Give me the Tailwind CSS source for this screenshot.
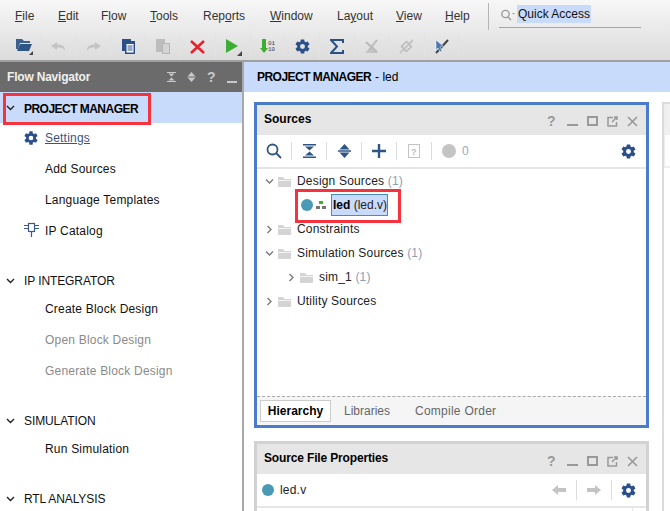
<!DOCTYPE html>
<html lang="en">
<head>
<meta charset="utf-8"/>
<title>Vivado - led</title>
<script src="https://cdn.jsdelivr.net/npm/@tailwindcss/browser@4"></script>
</head>
<body class="w-[670px] h-[511px] overflow-hidden relative bg-white font-['Liberation_Sans',Arial,sans-serif] text-[12px] text-[#111]">

<!-- menu + toolbar -->
<div class="h-[62px] border-b-2 border-[#a0a0a0] bg-gradient-to-b from-[#f7f7f7] to-[#dcdcdc]">
  <div class="h-[32px] flex items-center pl-[15px] text-[#333]">
    <span class="w-[43px]"><u>F</u>ile</span>
    <span class="w-[43px]"><u>E</u>dit</span>
    <span class="w-[49px]">F<u>l</u>ow</span>
    <span class="w-[53px]"><u>T</u>ools</span>
    <span class="w-[67px]">Rep<u>o</u>rts</span>
    <span class="w-[67px]"><u>W</u>indow</span>
    <span class="w-[59px]">La<u>y</u>out</span>
    <span class="w-[49px]"><u>V</u>iew</span>
    <span class="w-[42px]"><u>H</u>elp</span>
    <div class="w-px h-[27px] bg-[#b5b5b5] ml-px"></div>
    <div class="ml-[10px] w-[142px] h-[23px] self-start mt-[5px] border-b border-[#a5a5a5] flex items-start">
      <svg class="mt-[4px] ml-px" width="16" height="12" viewBox="0 0 16 12" fill="none" stroke="#999" stroke-width="1.3"><circle cx="5.5" cy="5" r="3.7"/><path d="M8 8l3 3"/><path d="M12 4h3l-1.500 1.500z" fill="#999" stroke="none"/></svg>
      <span class="ml-px bg-[#c8dbfb] h-[18px] leading-[18px] px-px text-[#111]">Quick Access</span>
    </div>
  </div>
  <div class="h-[28px] flex items-center pl-[7px]">
    <div class="w-[34.8px] h-[24px] flex items-center justify-center border-r border-[#e2e2e2]">
      <svg class="ml-[3px] mt-[2px]" width="20" height="18" viewBox="0 0 20 18"><path d="M1 1h6l2 2h6v2H5L3 11H1z" fill="#3d5f8f"/><path d="M5 6h12l-3 7H2z" fill="#2f5585"/><path d="M14 17l4-4v4z" fill="#444"/></svg>
    </div>
    <div class="w-[34.8px] h-[24px] flex items-center justify-center border-r border-[#e2e2e2]">
      <svg width="15" height="11" viewBox="0 0 15 11"><path d="M0 5l6-4v2.500c5 0 8 2 8 6-2-2.500-4-3-8-3V9z" fill="#c4c4c4"/></svg>
    </div>
    <div class="w-[34.8px] h-[24px] flex items-center justify-center border-r border-[#e2e2e2]">
      <svg width="15" height="11" viewBox="0 0 15 11"><path d="M15 5L9 1v2.500c-5 0-8 2-8 6 2-2.500 4-3 8-3V9z" fill="#c4c4c4"/></svg>
    </div>
    <div class="w-[34.8px] h-[24px] flex items-center justify-center border-r border-[#e2e2e2]">
      <svg class="mt-px" width="13" height="15" viewBox="0 0 13 15"><path d="M0 0h9v2H3v10H0z" fill="#2b4f8a"/><rect x="3" y="2" width="10" height="13" fill="#2b4f8a"/><rect x="4.500" y="5" width="7" height="8.500" fill="#fff"/><path d="M5.500 7h5M5.500 9h5M5.500 11h5" stroke="#2b4f8a"/></svg>
    </div>
    <div class="w-[34.8px] h-[24px] flex items-center justify-center border-r border-[#e2e2e2]">
      <svg class="mt-px" width="14" height="15" viewBox="0 0 14 15"><rect x="0" y="0" width="9" height="13" fill="#bdbdbd"/><rect x="6.500" y="4.500" width="7" height="10" fill="#d4d4d4" stroke="#b5b5b5"/></svg>
    </div>
    <div class="w-[34.8px] h-[24px] flex items-center justify-center border-r border-[#e2e2e2]">
      <svg class="mt-px" width="15" height="14" viewBox="0 0 15 14"><path d="M1 1l13 12M14 1L1 13" stroke="#e8202a" stroke-width="2.500"/></svg>
    </div>
    <div class="w-[34.8px] h-[24px] flex items-center justify-center border-r border-[#e2e2e2]">
      <svg class="ml-[3px] mt-[3px]" width="17" height="18" viewBox="0 0 17 18"><path d="M0 0l12 7L0 14z" fill="#3cae33"/><path d="M11 17l5-5v5z" fill="#444"/></svg>
    </div>
    <div class="w-[34.8px] h-[24px] flex items-center justify-center border-r border-[#e2e2e2]">
      <svg class="mt-px" width="15" height="15" viewBox="0 0 15 15"><path d="M2 0h4v9h2l-4 5-4-5h2z" fill="#3cae33"/><text x="8" y="6" font-size="6" fill="#444" font-family="Liberation Mono">01</text><text x="8" y="12" font-size="6" fill="#444" font-family="Liberation Mono">10</text></svg>
    </div>
    <div class="w-[34.8px] h-[24px] flex items-center justify-center border-r border-[#e2e2e2]">
      <svg class="mt-px" width="17" height="17" viewBox="0 0 24 24"><path fill="#2b4f8a" d="M19.400 13a7.800 7.800 0 0 0 0-2l2.500-1.900-2.400-4.200-3 1.200a7.500 7.500 0 0 0-1.700-1L14.400 2H9.600l-.4 3.100a7.500 7.500 0 0 0-1.700 1l-3-1.200-2.400 4.200L4.600 11a7.800 7.800 0 0 0 0 2l-2.500 1.900 2.400 4.200 3-1.200a7.500 7.500 0 0 0 1.700 1l.4 3.100h4.800l.4-3.100a7.500 7.500 0 0 0 1.700-1l3 1.200 2.400-4.200zM12 15.500a3.500 3.500 0 1 1 0-7 3.500 3.500 0 0 1 0 7z"/></svg>
    </div>
    <div class="w-[34.8px] h-[24px] flex items-center justify-center border-r border-[#e2e2e2]">
      <svg class="mt-px" width="14" height="15" viewBox="0 0 14 15"><path d="M13 4V1H1l6 6.500L1 14h12v-3" fill="none" stroke="#2b4f8a" stroke-width="2"/></svg>
    </div>
    <div class="w-[34.8px] h-[24px] flex items-center justify-center border-r border-[#e2e2e2]">
      <svg class="mt-px" width="15" height="15" viewBox="0 0 15 15"><path d="M1 14h13L8 6z" fill="#c4c4c4"/><path d="M2 3l11 10M13 1L5 11" stroke="#bbb" stroke-width="2"/></svg>
    </div>
    <div class="w-[34.8px] h-[24px] flex items-center justify-center border-r border-[#e2e2e2]">
      <svg class="mt-px" width="15" height="15" viewBox="0 0 15 15"><path d="M1 14L14 1" stroke="#c4c4c4" stroke-width="2"/><rect x="4" y="4" width="7" height="7" transform="rotate(45 7.500 7.500)" fill="none" stroke="#bbb" stroke-width="1.500"/></svg>
    </div>
    <div class="w-[34.8px] h-[24px] flex items-center justify-center border-r border-[#e2e2e2]">
      <svg class="mt-px" width="15" height="15" viewBox="0 0 15 15"><path d="M2 14L14 1" stroke="#444" stroke-width="2"/><path d="M2 1l7 6-3 1 2 4-2 1-2-4-2 2z" fill="#4a78b5" stroke="#fff" stroke-width=".5"/></svg>
    </div>
  </div>
</div>

<div class="flex h-[449px]">
  <!-- flow navigator -->
  <aside class="w-[244px] shrink-0 border-r-2 border-[#a9a9a9] tracking-[0.2px]">
    <div class="h-[30px] bg-[#6b6b6b] flex items-center pl-[7px] pr-[5px] font-bold">
      <span class="flex-1 text-[#f0f0f0] tracking-[-0.2px]">Flow Navigator</span>
      <div class="flex items-center gap-[11px]">
        <svg width="9" height="10" viewBox="0 0 9 10"><path d="M0 0h9v1H0zM0 9h9v1H0zM4.500 4.500L1.500 1.500h6zM4.500 5.500L1.500 8.500h6z" fill="#c8c8c8"/></svg>
        <svg width="9" height="10" viewBox="0 0 9 10"><path d="M4.500 0L1 4h7zM4.500 10L1 6h7zM.5 4.600h8v.8h-8z" fill="#c8c8c8"/></svg>
        <span class="font-bold text-[14px] leading-none text-[#c8c8c8] w-[9px]">?</span>
        <div class="w-[10px] h-[2px] bg-[#c8c8c8] mt-[9px]"></div>
      </div>
    </div>
    <div class="h-[31px] bg-[#c8dbfb] flex items-center">
      <svg class="ml-[6px]" width="9" height="6" viewBox="0 0 9 6" fill="none" stroke="#222" stroke-width="1.400"><path d="M1 1l3.500 3.500L8 1"/></svg>
      <span class="ml-[9px] mt-[2px] font-bold text-black tracking-[-0.53px]">PROJECT MANAGER</span>
    </div>
    <div class="h-[30px] flex items-center pl-[23px]">
      <svg class="-mt-px" width="16" height="16" viewBox="0 0 24 24"><path fill="#2b4f8a" d="M19.400 13a7.800 7.800 0 0 0 0-2l2.500-1.900-2.400-4.200-3 1.200a7.500 7.500 0 0 0-1.700-1L14.400 2H9.600l-.4 3.100a7.500 7.500 0 0 0-1.700 1l-3-1.200-2.400 4.200L4.600 11a7.800 7.800 0 0 0 0 2l-2.500 1.900 2.400 4.200 3-1.200a7.500 7.500 0 0 0 1.700 1l.4 3.100h4.800l.4-3.100a7.500 7.500 0 0 0 1.700-1l3 1.200 2.400-4.200zM12 15.500a3.500 3.500 0 1 1 0-7 3.500 3.500 0 0 1 0 7z"/></svg>
      <span class="ml-[6px] underline text-[#3a5488]">Settings</span>
    </div>
    <div class="h-[31px] flex items-center pl-[45px]">Add Sources</div>
    <div class="h-[31px] flex items-center pl-[45px]">Language Templates</div>
    <div class="h-[31px] flex items-center pl-[24px]">
      <svg class="-mt-[3px]" width="15" height="15" viewBox="0 0 15 15" fill="none" stroke="#3a5a8c" stroke-width="1.200"><rect x="4.500" y="1.500" width="6" height="8"/><path d="M0 3.500h4.500M10.500 3.500H15M0 6.500h4.500M10.500 6.500H15M7.500 9.500V15"/></svg>
      <span class="ml-[6px]">IP Catalog</span>
    </div>
    <div class="h-[19px]"></div>
    <div class="h-[31px] flex items-center tracking-[-0.1px]">
      <svg class="ml-[6px]" width="9" height="6" viewBox="0 0 9 6" fill="none" stroke="#222" stroke-width="1.400"><path d="M1 1l3.500 3.500L8 1"/></svg>
      <span class="ml-[9px]">IP INTEGRATOR</span>
    </div>
    <div class="h-[31px] flex items-center pl-[45px] -mt-[3px]">Create Block Design</div>
    <div class="h-[31px] flex items-center pl-[45px] text-[#8a8a8a]">Open Block Design</div>
    <div class="h-[31px] flex items-center pl-[45px] text-[#8a8a8a]">Generate Block Design</div>
    <div class="h-[19px]"></div>
    <div class="h-[31px] flex items-center tracking-[-0.1px]">
      <svg class="ml-[6px]" width="9" height="6" viewBox="0 0 9 6" fill="none" stroke="#222" stroke-width="1.400"><path d="M1 1l3.500 3.500L8 1"/></svg>
      <span class="ml-[9px]">SIMULATION</span>
    </div>
    <div class="h-[31px] flex items-center pl-[45px] -mt-[3px]">Run Simulation</div>
    <div class="h-[19px]"></div>
    <div class="h-[31px] flex items-center tracking-[-0.1px]">
      <svg class="ml-[6px]" width="9" height="6" viewBox="0 0 9 6" fill="none" stroke="#222" stroke-width="1.400"><path d="M1 1l3.500 3.500L8 1"/></svg>
      <span class="ml-[9px]">RTL ANALYSIS</span>
    </div>
  </aside>

  <!-- main -->
  <main class="flex-1 min-w-0">
    <div class="h-[30px] bg-[#c8dbfb] flex items-center pl-[13px] text-black"><b class="tracking-[-0.53px]">PROJECT MANAGER</b><span class="ml-[4px]">- led</span></div>
    <div class="flex pl-[10px] pt-[10px] gap-[13px] h-[419px] bg-white">
      <div class="w-[395px] shrink-0">
        <!-- sources panel -->
        <section class="h-[326px] border-[3px] border-[#4a7bcc] flex flex-col">
          <div class="h-[30px] bg-[#e6e6e6] flex items-center pl-[7px] pr-[8px]">
            <b class="flex-1 text-black pb-[2px]">Sources</b>
            <div class="flex items-center gap-[9px] mt-[2px]">
              <span class="font-bold text-[14px] leading-none text-[#999] w-[11px]">?</span>
              <div class="w-[11px] h-[2px] bg-[#999] mt-[8px]"></div>
              <div class="w-[11px] h-[10px] border-2 border-[#999]"></div>
              <svg width="11" height="11" viewBox="0 0 11 11" fill="none" stroke="#999" stroke-width="1.500"><path d="M6 1.500H1v8.500h8.500V6M5 6l5-5M7 1h3v3"/></svg>
              <svg width="11" height="11" viewBox="0 0 11 11" fill="none" stroke="#999" stroke-width="1.600"><path d="M1 1l9 9M10 1l-9 9"/></svg>
            </div>
          </div>
          <div class="h-[34px] shrink-0 border-b-2 border-[#e6e6e6] flex items-center">
            <div class="w-[35px] h-[18px] border-r border-[#ddd] flex items-center justify-center">
              <svg width="16" height="16" viewBox="0 0 16 16" fill="none" stroke="#2f5585" stroke-width="1.800"><circle cx="6.500" cy="6.500" r="5"/><path d="M10 10l5 5"/></svg>
            </div>
            <div class="w-[35px] h-[18px] border-r border-[#ddd] flex items-center justify-center">
              <svg width="13" height="14" viewBox="0 0 13 14"><path d="M0 0h13v1.500H0zM0 12.500h13V14H0zM6.500 6.500L2 2.500h9zM6.500 7.500L2 11.500h9z" fill="#2f5585"/></svg>
            </div>
            <div class="w-[35px] h-[18px] border-r border-[#ddd] flex items-center justify-center">
              <svg width="13" height="14" viewBox="0 0 13 14"><path d="M6.500 0L1.500 5.500h10zM6.500 14l-5-5.500h10zM0 6.300h13v1.400H0z" fill="#2f5585"/></svg>
            </div>
            <div class="w-[35px] h-[18px] border-r border-[#ddd] flex items-center justify-center">
              <svg width="14" height="14" viewBox="0 0 14 14"><path d="M5.800 0h2.400v5.800H14v2.400H8.200V14H5.800V8.200H0V5.800h5.800z" fill="#2f5585"/></svg>
            </div>
            <div class="w-[35px] h-[18px] border-r border-[#ddd] flex items-center justify-center">
              <svg width="12" height="14" viewBox="0 0 12 14" fill="none"><rect x=".5" y=".5" width="11" height="13" stroke="#c4c4c4"/><text x="3" y="11" font-size="9" font-weight="bold" fill="#bbb" font-family="Liberation Sans">?</text></svg>
            </div>
            <div class="ml-[10px] w-[14px] h-[14px] rounded-full bg-[#c4c4c4]"></div>
            <span class="ml-[6px] flex-1 text-[#98a9b8]">0</span>
            <svg class="mr-[9px]" width="17" height="17" viewBox="0 0 24 24"><path fill="#2b4f8a" d="M19.400 13a7.800 7.800 0 0 0 0-2l2.500-1.900-2.400-4.200-3 1.200a7.500 7.500 0 0 0-1.700-1L14.400 2H9.600l-.4 3.100a7.500 7.500 0 0 0-1.700 1l-3-1.200-2.400 4.200L4.600 11a7.800 7.800 0 0 0 0 2l-2.500 1.900 2.400 4.200 3-1.200a7.500 7.500 0 0 0 1.700 1l.4 3.100h4.800l.4-3.100a7.500 7.500 0 0 0 1.700-1l3 1.200 2.400-4.200zM12 15.500a3.500 3.500 0 1 1 0-7 3.500 3.500 0 0 1 0 7z"/></svg>
          </div>
          <div class="flex-1 text-[#222] tracking-[0.18px]">
            <div class="h-[24px] flex items-center pl-[8px] gap-[4px]">
              <svg width="9" height="9" viewBox="0 0 9 9" fill="none" stroke="#777" stroke-width="1.300"><path d="M1 2.500l3.500 3.500L8 2.500"/></svg>
              <svg width="13" height="11" viewBox="0 0 13 11"><path d="M0 1h5l1.500 2H13v8H0z" fill="#d4d4d4"/><path d="M0 4.500h13" stroke="#f2f2f2"/></svg>
              <span class="ml-[2px]">Design Sources <span class="text-[#8d9db3]">(1)</span></span>
            </div>
            <div class="h-[24px] flex items-center pl-[44px]">
              <div class="w-[12px] h-[12px] rounded-full bg-[#4b9ab5]"></div>
              <svg class="ml-[3px]" width="10" height="9" viewBox="0 0 10 9"><rect x="3" y="0" width="4" height="3" fill="#3cae33"/><rect x="0" y="5" width="4" height="3" fill="#777"/><rect x="6" y="5" width="4" height="3" fill="#777"/></svg>
              <span class="ml-[5px] bg-[#c8dbfb] border border-[#4a8ac0] h-[22px] leading-[20px] px-px w-[57px] whitespace-nowrap tracking-normal"><b class="text-black">led</b> (led.v)</span>
            </div>
            <div class="h-[24px] flex items-center pl-[8px] gap-[4px]">
              <svg width="9" height="9" viewBox="0 0 9 9" fill="none" stroke="#777" stroke-width="1.300"><path d="M2.500 1L6 4.500 2.500 8"/></svg>
              <svg width="13" height="11" viewBox="0 0 13 11"><path d="M0 1h5l1.500 2H13v8H0z" fill="#d4d4d4"/><path d="M0 4.500h13" stroke="#f2f2f2"/></svg>
              <span class="ml-[2px]">Constraints</span>
            </div>
            <div class="h-[24px] flex items-center pl-[8px] gap-[4px]">
              <svg width="9" height="9" viewBox="0 0 9 9" fill="none" stroke="#777" stroke-width="1.300"><path d="M1 2.500l3.500 3.500L8 2.500"/></svg>
              <svg width="13" height="11" viewBox="0 0 13 11"><path d="M0 1h5l1.500 2H13v8H0z" fill="#d4d4d4"/><path d="M0 4.500h13" stroke="#f2f2f2"/></svg>
              <span class="ml-[2px]">Simulation Sources <span class="text-[#8d9db3]">(1)</span></span>
            </div>
            <div class="h-[24px] flex items-center pl-[30px] gap-[4px]">
              <svg width="9" height="9" viewBox="0 0 9 9" fill="none" stroke="#777" stroke-width="1.300"><path d="M2.500 1L6 4.500 2.500 8"/></svg>
              <svg width="13" height="11" viewBox="0 0 13 11"><path d="M0 1h5l1.500 2H13v8H0z" fill="#d4d4d4"/><path d="M0 4.500h13" stroke="#f2f2f2"/></svg>
              <span class="ml-[2px]">sim_1 <span class="text-[#8d9db3]">(1)</span></span>
            </div>
            <div class="h-[24px] flex items-center pl-[8px] gap-[4px]">
              <svg width="9" height="9" viewBox="0 0 9 9" fill="none" stroke="#777" stroke-width="1.300"><path d="M2.500 1L6 4.500 2.500 8"/></svg>
              <svg width="13" height="11" viewBox="0 0 13 11"><path d="M0 1h5l1.500 2H13v8H0z" fill="#d4d4d4"/><path d="M0 4.500h13" stroke="#f2f2f2"/></svg>
              <span class="ml-[2px]">Utility Sources</span>
            </div>
          </div>
          <div class="h-[29px] border-t border-dashed border-[#aaa] bg-[#f5f5f5] flex items-center pl-[3px]">
            <div class="h-[22px] w-[71px] border border-[#ccc] bg-white flex items-center justify-center font-bold text-black">Hierarchy</div>
            <span class="ml-[13px] text-[#666]">Libraries</span>
            <span class="ml-[25px] text-[#666] tracking-[0.25px]">Compile Order</span>
          </div>
        </section>
        <!-- source file properties -->
        <section class="mt-[13px] h-[80px] border-[3px] border-b-0 border-[#d2d2d2]">
          <div class="h-[30px] bg-[#e6e6e6] flex items-center pl-[7px] pr-[8px]">
            <b class="flex-1 text-black pb-[2px] tracking-[-0.15px]">Source File Properties</b>
            <div class="flex items-center gap-[9px] mt-[4px]">
              <span class="font-bold text-[14px] leading-none text-[#999] w-[11px]">?</span>
              <div class="w-[11px] h-[2px] bg-[#999] mt-[8px]"></div>
              <div class="w-[11px] h-[10px] border-2 border-[#999]"></div>
              <svg width="11" height="11" viewBox="0 0 11 11" fill="none" stroke="#999" stroke-width="1.500"><path d="M6 1.500H1v8.500h8.500V6M5 6l5-5M7 1h3v3"/></svg>
              <svg width="11" height="11" viewBox="0 0 11 11" fill="none" stroke="#999" stroke-width="1.600"><path d="M1 1l9 9M10 1l-9 9"/></svg>
            </div>
          </div>
          <div class="h-[34px] border-b-2 border-[#e6e6e6] flex items-center pl-[5px] pr-[9px]">
            <div class="w-[12px] h-[12px] rounded-full bg-[#4b9ab5]"></div>
            <span class="ml-[6px] flex-1 text-[#222] tracking-[0.2px]">led.v</span>
            <svg width="14" height="10" viewBox="0 0 14 10"><path d="M0 5l6-5v3h8v4H6v3z" fill="#c4c4c4"/></svg>
            <div class="w-px h-[20px] bg-[#ddd] mx-[10px]"></div>
            <svg width="14" height="10" viewBox="0 0 14 10"><path d="M14 5L8 0v3H0v4h8v3z" fill="#c4c4c4"/></svg>
            <div class="w-px h-[20px] bg-[#ddd] ml-[10px] mr-[8px]"></div>
            <svg width="17" height="17" viewBox="0 0 24 24"><path fill="#2b4f8a" d="M19.400 13a7.800 7.800 0 0 0 0-2l2.500-1.900-2.400-4.200-3 1.200a7.500 7.500 0 0 0-1.700-1L14.400 2H9.600l-.4 3.100a7.500 7.500 0 0 0-1.700 1l-3-1.200-2.400 4.200L4.600 11a7.800 7.800 0 0 0 0 2l-2.500 1.900 2.400 4.200 3-1.200a7.500 7.500 0 0 0 1.700 1l.4 3.100h4.800l.4-3.100a7.500 7.500 0 0 0 1.700-1l3 1.200 2.400-4.200zM12 15.500a3.500 3.500 0 1 1 0-7 3.500 3.500 0 0 1 0 7z"/></svg>
          </div>
          <div class="h-[10px] flex justify-end"><div class="w-[14px] border-l border-[#e6e6e6]"></div></div>
        </section>
      </div>
      <!-- next panel, cut off by the window -->
      <div class="flex-1 h-[409px] border-l-2 border-t-2 border-[#dcdcdc]">
        <div class="h-[31px] bg-[#f0f0f0] border-l border-[#eee]"></div>
        <div class="h-[33px] border-l border-[#eee] border-b-2 border-b-[#eeeeee]"></div>
      </div>
    </div>
  </main>
</div>

<!-- red annotation boxes -->
<div class="absolute left-[3px] top-[93px] w-[148px] h-[32px] border-[3px] border-[#f5333f]"></div>
<div class="absolute left-[295px] top-[189px] w-[106px] h-[34px] border-[3px] border-[#f5333f]"></div>
</body>
</html>
